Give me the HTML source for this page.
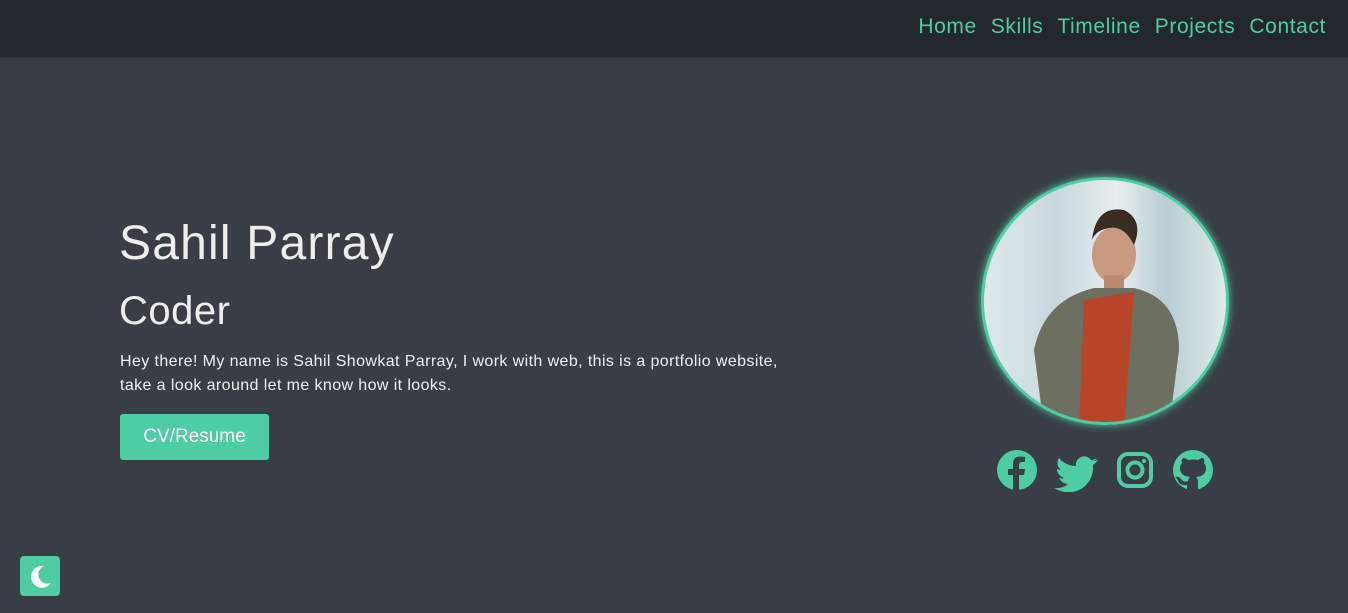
<!DOCTYPE html>
<html><head><meta charset="utf-8"><style>
*{margin:0;padding:0;box-sizing:border-box}
body{width:1348px;height:613px;overflow:hidden;background:#393e46;font-family:"Liberation Sans",sans-serif;position:relative}
.hdr{position:absolute;top:0;left:0;width:1348px;height:58px;background:#23272e;border-bottom:1px solid #2f343b}
.nav{position:absolute;right:22px;top:15px;font-size:21px;color:#4ecca3;letter-spacing:0.6px}
.nav span{margin-left:14px}
h1{position:absolute;left:119px;top:216px;font-size:48px;font-weight:normal;color:#eeeeee;letter-spacing:1.2px}
h2{position:absolute;left:119px;top:289px;font-size:40px;font-weight:normal;color:#eeeeee;letter-spacing:0.5px}
p{position:absolute;left:120px;top:350px;font-size:16px;line-height:24px;color:#eeeeee;width:700px;letter-spacing:0.4px}
.btn{position:absolute;left:120px;top:414px;width:149px;height:46px;background:#4ecca3;border-radius:3px;color:#fff;font-size:19px;text-align:center;line-height:46px}
.pic{position:absolute;left:981px;top:177px;width:248px;height:248px;border-radius:50%;border:3px solid #4ecca3;box-shadow:0 0 8px #4ecca3;overflow:hidden;
background:linear-gradient(90deg,#dfe8ec 0%,#c9d8de 30%,#e8eef0 55%,#b8cdd2 75%,#dfe9ec 100%)}
.moon{position:absolute;left:20px;top:556px;width:40px;height:40px;background:#4ecca3;border-radius:4px}
.icons{position:absolute;left:996px;top:450px}
</style></head><body>
<div class="hdr"><div class="nav"><span>Home</span><span>Skills</span><span>Timeline</span><span>Projects</span><span>Contact</span></div></div>
<h1>Sahil Parray</h1>
<h2>Coder</h2>
<p>Hey there! My name is Sahil Showkat Parray, I work with web, this is a portfolio website,<br>take a look around let me know how it looks.</p>
<div class="btn">CV/Resume</div>
<div class="pic"><svg width="248" height="248" viewBox="0 0 248 248">
<ellipse cx="130" cy="75" rx="22" ry="28" fill="#c89a80"/>
<path d="M108 60 Q112 25 140 30 Q160 40 150 65 Q140 45 125 48 Q112 50 108 60Z" fill="#3a2c25"/>
<rect x="120" y="95" width="20" height="20" fill="#b88a70"/>
<path d="M60 248 L50 170 Q60 120 110 108 L150 108 Q195 118 195 170 L185 248Z" fill="#6d7060"/>
<path d="M95 248 L100 120 L150 112 L140 248Z" fill="#b8442a"/>
</svg></div>
<svg class="icons" width="220" height="42" viewBox="0 0 220 42" fill="#4ecca3">
<circle cx="21" cy="20" r="20"/><path d="M23 41 V25 H28 L29 19 H23 V15 Q23 12 26 12 H29 V7 Q26 6.5 24 6.5 Q17 6.5 17 14 V19 H12 V25 H17 V41Z" fill="#393e46"/>
<path d="M101 8 Q98 10 95 10 Q91 5 85 7 Q79 10 80 16 Q70 16 63 8 Q59 15 65 20 Q63 20 61 19 Q61 25 68 28 Q66 29 63 28 Q66 34 72 34 Q66 39 58 38 Q74 47 88 37 Q98 28 97 15 Q100 13 102 10 Q99 11 97 11 Q100 10 101 8Z"/>
<rect x="123" y="4" width="32" height="32" rx="9" fill="none" stroke="#4ecca3" stroke-width="4"/><circle cx="139" cy="20" r="7.5" fill="none" stroke="#4ecca3" stroke-width="4"/><circle cx="148" cy="11" r="2"/>
<circle cx="197" cy="20" r="20"/><path d="M191 41 V35 Q184 36 182 31 Q181 28 179 27 Q183 26 185 29 Q188 33 192 31 Q192 29 194 27 Q184 26 184 18 Q184 15 186 13 Q185 10 187 8 Q190 8 192 10 Q197 9 202 10 Q205 8 207 8 Q209 10 208 13 Q210 15 210 18 Q210 26 200 27 Q202 29 202 32 V41Z" fill="#393e46"/>
</svg>
<div class="moon"><svg width="40" height="40" viewBox="0 0 40 40"><path d="M24 10 A11 11 0 1 0 31 27 A9 9 0 0 1 24 10Z" fill="#fff"/></svg></div>
</body></html>
